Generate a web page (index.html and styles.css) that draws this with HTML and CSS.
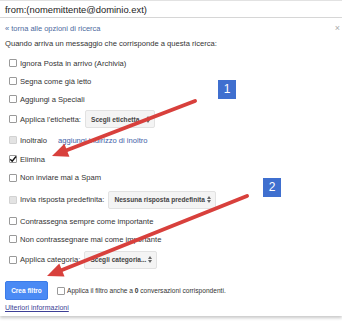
FILE: index.html
```html
<!DOCTYPE html>
<html lang="it">
<head>
    <meta charset="UTF-8">
    <meta name="viewport" content="width=device-width, initial-scale=1.0">
    <title>Crea filtro</title>
    <link rel="stylesheet" href="styles.css">
</head>
<body>
    <div class="search">from:(nomemittente@dominio.ext)</div>

    <section class="panel">
        <div class="back">
            <a href="#">« torna alle opzioni di ricerca</a>
            <span class="close">×</span>
        </div>
        <p class="intro">Quando arriva un messaggio che corrisponde a questa ricerca:</p>

        <ul class="actions">
            <li class="row"><span class="cb"></span>Ignora Posta in arrivo (Archivia)</li>
            <li class="row"><span class="cb"></span>Segna come già letto</li>
            <li class="row"><span class="cb"></span>Aggiungi a Speciali</li>
            <li class="row tall">
                <span class="cb"></span>Applica l'etichetta:
                <span class="select label-select">Scegli etichetta... <svg class="updown" viewBox="0 0 4 7"><path d="M0 3L2 0L4 3Z M0 4L2 7L4 4Z"/></svg></span>
            </li>
            <li class="row mid">
                <span class="cb off"></span>Inoltralo
                <a class="fwd" href="#">aggiungi indirizzo di inoltro</a>
            </li>
            <li class="row">
                <span class="cb"><svg viewBox="0 0 8 8"><path d="M1.2 4.2L3.2 6.2L7 1.5" fill="none" stroke="#111" stroke-width="1.4"/></svg></span>Elimina
            </li>
            <li class="row spam"><span class="cb"></span>Non inviare mai a Spam</li>
            <li class="row reply">
                <span class="cb off"></span>Invia risposta predefinita:
                <span class="select reply-select">Nessuna risposta predefinita <svg class="updown" viewBox="0 0 4 7"><path d="M0 3L2 0L4 3Z M0 4L2 7L4 4Z"/></svg></span>
            </li>
            <li class="row"><span class="cb"></span>Contrassegna sempre come importante</li>
            <li class="row"><span class="cb"></span>Non contrassegnare mai come importante</li>
            <li class="row cat">
                <span class="cb"></span>Applica categoria:
                <span class="select cat-select">Scegli categoria... <svg class="updown" viewBox="0 0 4 7"><path d="M0 3L2 0L4 3Z M0 4L2 7L4 4Z"/></svg></span>
            </li>
        </ul>

        <div class="footer">
            <button class="btn">Crea filtro</button>
            <span class="cb"></span>Applica il filtro anche a&nbsp;<b>0</b>&nbsp;conversazioni corrispondenti.
        </div>
        <a class="more" href="#">Ulteriori informazioni</a>
    </section>

    <div class="badge badge-1">1</div>
    <div class="badge badge-2">2</div>

    <svg class="arrows" width="342" height="323" viewBox="0 0 342 323">
        <line x1="195" y1="101" x2="66" y2="150.5" />
        <polygon points="52,156 69.4,156.8 64.4,143.8" />
        <line x1="247" y1="196" x2="62" y2="270" />
        <polygon points="47,276 64.5,276.6 59.3,263.6" />
    </svg>
</body>
</html>
```

FILE: styles.css
```css
body {
    margin: 0;
    width: 342px;
    height: 323px;
    overflow: hidden;
    position: relative;
    font-family: "Liberation Sans", Arial, sans-serif;
    background: #fff;
    color: #333;
}
.search {
    height: 16px;
    line-height: 17px;
    border-top: 1px solid #e2e2e2;
    border-bottom: 1px solid #d9d9d9;
    padding-left: 5px;
    font-size: 9.4px;
    color: #222;
}
.panel {
    height: 298px;
    box-sizing: border-box;
    padding: 0 5px;
    box-shadow: 0 2px 3px rgba(0,0,0,0.22);
}
.back {
    height: 20px;
    display: flex;
    align-items: center;
    justify-content: space-between;
    font-size: 7.5px;
}
.back a {
    color: #4d6a9e;
    text-decoration: none;
}
.close {
    color: #aaa;
    font-size: 9px;
    margin-right: -3px;
}
.intro {
    margin: 0 0 4px;
    font-size: 7.6px;
    line-height: 12px;
}
.actions {
    list-style: none;
    margin: 0;
    padding: 0 0 0 4px;
}
.row {
    display: flex;
    align-items: center;
    height: 18px;
    font-size: 7.6px;
    white-space: nowrap;
}
.row.tall { height: 22px; }
.row.mid { height: 20px; }
.row.spam { height: 19px; }
.row.reply { height: 25px; }
.row.cat { height: 23px; }
.cb {
    width: 8px;
    height: 8px;
    box-sizing: border-box;
    border: 1px solid #9a9a9a;
    border-radius: 1px;
    background: #fff;
    margin-right: 3px;
    flex-shrink: 0;
    display: flex;
}
.cb svg {
    width: 8px;
    height: 8px;
    margin: -1px;
}
.cb.off {
    background: #e3e3e3;
    border-color: #d2d2d2;
}
.select {
    display: flex;
    align-items: center;
    justify-content: space-between;
    height: 18px;
    box-sizing: border-box;
    margin-left: 4px;
    padding: 0 4px 0 5px;
    border: 1px solid #e2e2e2;
    border-radius: 2px;
    background: #f4f4f4;
    font-weight: bold;
    font-size: 6.6px;
    color: #444;
}
.label-select { width: 70px; }
.reply-select { width: 108px; }
.cat-select { width: 73px; }
.updown {
    width: 4px;
    height: 7px;
    fill: #666;
}
.fwd {
    margin-left: 11px;
    color: #4262a8;
    text-decoration: none;
}
.footer {
    display: flex;
    align-items: center;
    margin-top: 10px;
    font-size: 6.6px;
    white-space: nowrap;
}
.footer .cb {
    margin-right: 2px;
}
.btn {
    width: 43px;
    height: 19px;
    box-sizing: border-box;
    margin-right: 9px;
    padding: 0;
    border: 1px solid #3b7be8;
    border-radius: 2px;
    background: #4a8af4;
    color: #fff;
    font-family: inherit;
    font-weight: bold;
    font-size: 6.5px;
}
.more {
    display: block;
    margin-top: 3px;
    line-height: 10px;
    font-size: 7px;
    color: #3d3f96;
}
.badge {
    position: absolute;
    width: 18px;
    height: 19px;
    background: #3f6fcf;
    color: #fff;
    font-size: 12px;
    line-height: 19px;
    text-align: center;
}
.badge-1 { left: 218px; top: 80px; }
.badge-2 { left: 263px; top: 178px; }
.arrows {
    position: absolute;
    left: 0;
    top: 0;
    pointer-events: none;
}
.arrows line {
    stroke: #d8403c;
    stroke-width: 4;
    stroke-linecap: round;
}
.arrows polygon {
    fill: #d8403c;
}
```
